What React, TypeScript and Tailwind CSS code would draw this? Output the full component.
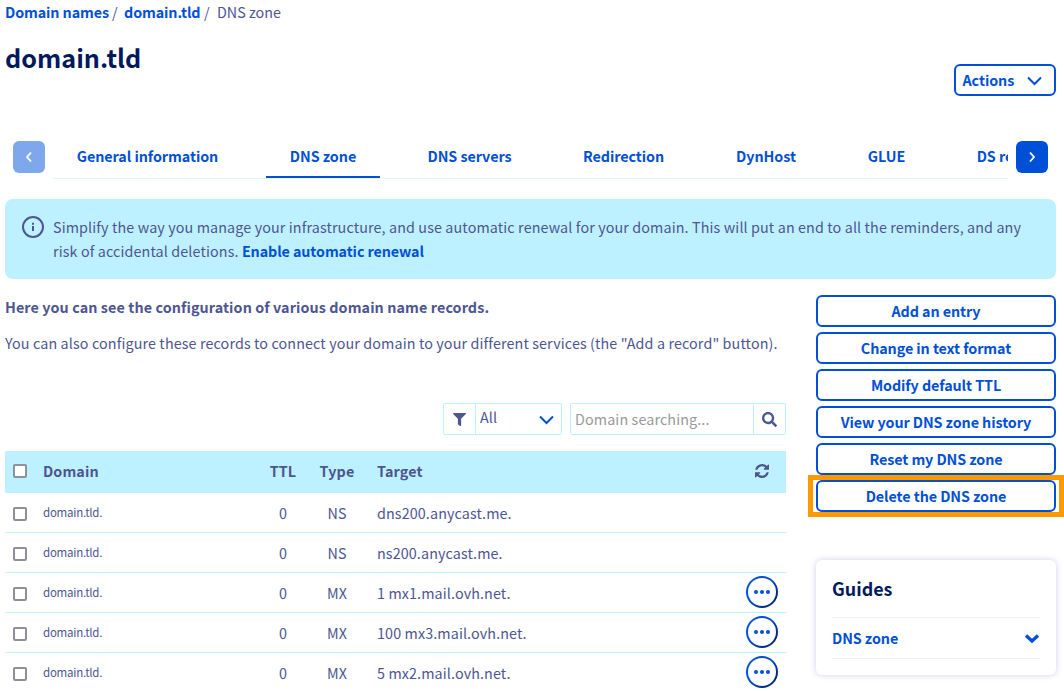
import React from "react";
import { FaFilter, FaSearch } from "react-icons/fa";

const tabs = [
  { label: "General information", width: "w-[189px]" },
  { label: "DNS zone", width: "w-[114px]", active: true },
  { label: "DNS servers", width: "w-[131px]" },
  { label: "Redirection", width: "w-[129px]" },
  { label: "DynHost", width: "w-[108px]" },
  { label: "GLUE", width: "w-[85px]" },
  { label: "DS records", width: "w-[122px]" },
];

const records = [
  { type: "NS", target: "dns200.anycast.me.", menu: false },
  { type: "NS", target: "ns200.anycast.me.", menu: false },
  { type: "MX", target: "1 mx1.mail.ovh.net.", menu: true },
  { type: "MX", target: "100 mx3.mail.ovh.net.", menu: true },
  { type: "MX", target: "5 mx2.mail.ovh.net.", menu: true },
];

const zoneActions = [
  "Add an entry",
  "Change in text format",
  "Modify default TTL",
  "View your DNS zone history",
  "Reset my DNS zone",
  "Delete the DNS zone",
];

function Chevron({ className, d = "M1 1.5l6.5 6.5L14 1.5", stroke = 2, box = "0 0 15 10" }: { className: string; d?: string; stroke?: number; box?: string }) {
  return (
    <svg viewBox={box} className={className} fill="none" stroke="currentColor" strokeWidth={stroke}>
      <path d={d} />
    </svg>
  );
}

function Checkbox() {
  return <span className="block size-3.5 rounded-[2px] border-2 border-[#8f8f9d] bg-white" />;
}

function MenuButton() {
  return (
    <button className="flex size-8 items-center justify-center rounded-full bg-linear-to-br from-[#0050d7] from-40% to-[#00185e] p-[2px]">
      <span className="flex size-7 items-center justify-center gap-[2px] rounded-full bg-white">
        <span className="size-1 rounded-full bg-[#0050d7]" />
        <span className="size-1 rounded-full bg-[#0050d7]" />
        <span className="size-1 rounded-full bg-[#0050d7]" />
      </span>
    </button>
  );
}

export default function App() {
  return (
    <div className="h-[691px] w-[1064px] overflow-hidden bg-white pr-2 pl-[5px] font-['Noto_Sans_CJK_SC',sans-serif] text-[14.33px] leading-6 tracking-[0.114px] text-[#4d5592]">
      <nav className="flex h-6 whitespace-pre">
        <a className="w-[107px] font-bold tracking-[-0.1px] text-[#0050d7]">Domain names</a>
        <span className="w-[12px]">/</span>
        <a className="w-[80px] font-bold tracking-[-0.1px] text-[#0050d7]">domain.tld</a>
        <span className="w-[13px]">/</span>
        <span className="tracking-normal">DNS zone</span>
      </nav>

      <header className="flex h-[117px] justify-between">
        <h1 className="pt-[15px] text-[25.2px] leading-9 font-bold tracking-normal text-[#00185e]">domain.tld</h1>
        <button className="mt-10 flex h-8 w-[102px] items-center justify-between rounded-md border-2 border-[#0050d7] pr-[12px] pl-[6.5px] font-bold tracking-[-0.06px] text-[#0050d7]">
          Actions
          <Chevron className="mt-px h-2.5 w-[15px]" />
        </button>
      </header>

      <div className="flex h-[38px] px-2">
        <button className="flex size-8 shrink-0 items-center justify-center rounded-md bg-[#7fa7eb] text-white">
          <Chevron className="h-3 w-2" box="0 0 8 12" d="M6 1.5L2 6l4 4.5" stroke={1.8} />
        </button>
        <div className="mr-2 ml-2 flex w-[955px] gap-6 overflow-hidden border-b border-[#e3f7fe]">
          {tabs.map((t) => (
            <a
              key={t.label}
              className={`flex h-[37px] shrink-0 items-start justify-center pt-[3px] font-bold tracking-[-0.06px] whitespace-nowrap text-[#0050d7] ${t.width} ${t.active ? "border-b-2 border-[#0050d7]" : ""}`}
            >
              {t.label}
            </a>
          ))}
        </div>
        <button className="flex size-8 shrink-0 items-center justify-center rounded-md bg-[#0050d7] text-white">
          <Chevron className="h-3 w-2" box="0 0 8 12" d="M2 1.5L6 6l-4 4.5" stroke={1.8} />
        </button>
      </div>

      <section className="mt-5 flex h-20 rounded-lg bg-[#bef1ff] pt-4 pl-4">
        <svg viewBox="0 0 24 24" className="size-6 shrink-0" fill="none" stroke="#4d5592" strokeWidth="2">
          <circle cx="12" cy="12" r="10" />
          <path d="M12 11v5M12 7.8v2" />
        </svg>
        <p className="ml-2 whitespace-nowrap">
          Simplify the way you manage your infrastructure, and use automatic renewal for your domain. This will put an end to all the reminders, and any
          <br />
          risk of accidental deletions. <a className="font-bold tracking-[-0.1px] text-[#0050d7]">Enable automatic renewal</a>
        </p>
      </section>

      <div className="mt-4 flex justify-between">
        <main className="w-[781px]">
          <p className="font-bold tracking-[0.1px]">Here you can see the configuration of various domain name records.</p>
          <p className="mt-3 whitespace-nowrap">You can also configure these records to connect your domain to your different services (the "Add a record" button).</p>

          <div className="mt-12 flex h-8 justify-end gap-2">
            <div className="flex w-[119px] rounded-[2px] border border-[#bef1ff]">
              <span className="flex w-8 items-center justify-center border-r border-[#bef1ff]">
                <FaFilter className="size-[13px]" />
              </span>
              <span className="flex flex-1 items-center justify-between pr-[7.5px] pl-1">
                <span className="pb-1">All</span>
                <Chevron className="mt-[2px] h-2.5 w-[15px] text-[#0050d7]" />
              </span>
            </div>
            <div className="flex w-[216px] rounded-[2px] border border-[#bef1ff]">
              <span className="flex flex-1 items-center pl-1 text-[#999999]">Domain searching...</span>
              <span className="flex w-8 items-center justify-center border-l border-[#bef1ff]">
                <FaSearch className="size-[15px]" />
              </span>
            </div>
          </div>

          <div className="mt-4 grid h-[42px] grid-cols-[38px_213px_54px_54px_378px_1fr] items-center bg-[#bef1ff] pb-0.5 font-bold">
            <span className="pl-2"><Checkbox /></span>
            <span>Domain</span>
            <span className="text-center">TTL</span>
            <span className="text-center">Type</span>
            <span className="pl-[13px]">Target</span>
            <svg viewBox="0 0 1536 1536" className="ml-[13px] size-[14px]" fill="currentColor">
              <path d="M1511 928q0 5-1 7-64 268-268 434.500T764 1536q-146 0-282.500-55T238 1324l-129 129q-19 19-45 19t-45-19-19-45V960q0-26 19-45t45-19h448q26 0 45 19t19 45-19 45l-137 137q71 66 161 102t187 36q134 0 250-65t186-179q11-17 53-117 8-23 30-23h192q13 0 22.500 9.500t9.500 22.500zm25-800v448q0 26-19 45t-45 19h-448q-26 0-45-19t-19-45 19-45l138-138Q969 256 768 256q-134 0-250 65T332 500q-11 17-53 117-8 23-30 23H50q-13 0-22.500-9.500T18 608v-7q65-268 270-434.500T768 0q146 0 284 55.500T1297 212l130-129q19-19 45-19t45 19 19 45z" />
            </svg>
          </div>
          {records.map((r) => (
            <div key={r.target} className="grid h-10 grid-cols-[38px_213px_54px_54px_378px_1fr] items-center border-b border-[#bef1ff]">
              <span className="pt-[3px] pl-2"><Checkbox /></span>
              <span className="pb-0.5 text-[11.5px] tracking-[-0.25px]">domain.tld.</span>
              <span className="pt-px text-center">0</span>
              <span className="pt-px text-center tracking-normal">{r.type}</span>
              <span className="pt-px pl-[13px]">{r.target}</span>
              <span className="pb-0.5 pl-1">{r.menu && <MenuButton />}</span>
            </div>
          ))}
        </main>

        <aside className="w-60">
          <div className="relative flex flex-col gap-[5px]">
            {zoneActions.map((a) => (
              <button key={a} className="h-8 rounded-md border-2 border-[#0050d7] bg-white text-center leading-7 font-bold tracking-[-0.08px] text-[#0050d7]">
                {a}
              </button>
            ))}
            <div className="absolute top-[180px] -left-2 h-[42px] w-64 border-[5px] border-[#ff9900]" />
          </div>
          <div className="mt-12 h-[115px] rounded-md px-4 pt-4 shadow-[0_0_6px_rgba(0,14,156,0.2)]">
            <h2 className="-mt-0.5 h-[43px] text-[17.9px] leading-7 font-bold tracking-normal text-[#00185e]">Guides</h2>
            <div className="flex h-[42px] items-center justify-between border-y border-[#f2f2f2] font-bold tracking-[-0.08px] text-[#0050d7]">
              DNS zone
              <Chevron className="mt-px h-[11px] w-4" box="0 0 16 11" d="M2 2.500l6 5.500 6-5.500" stroke={3.4} />
            </div>
          </div>
        </aside>
      </div>
    </div>
  );
}
